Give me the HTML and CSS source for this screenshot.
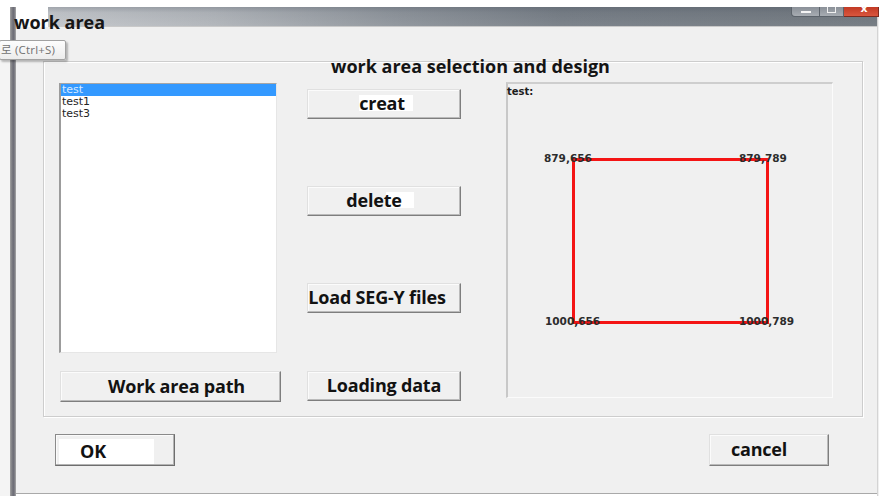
FILE: index.html
```html
<!DOCTYPE html>
<html lang="en">
<head>
<meta charset="utf-8">
<title>work area</title>
<link rel="stylesheet" href="styles.css">
</head>
<body>
<div class="screen">
  <div class="topline"></div>
  <div class="desk">
    <div class="gutter"></div>
    <div class="edge"></div>
    <div class="window">
      <div class="titlebar">
        <div class="titlebar-blank"></div>
        <div class="caption">
          <div class="controls">
            <span class="ctl ctl-min"><i></i></span>
            <span class="ctl ctl-max"><i></i></span>
            <span class="ctl ctl-close"><i>x</i></span>
          </div>
        </div>
      </div>
      <div class="client">
        <div class="groupbox">
          <div class="legend">work area selection and design</div>
          <div class="col-list">
            <div class="listbox">
              <div class="item selected">test</div>
              <div class="item">test1</div>
              <div class="item">test3</div>
            </div>
            <button class="btn btn-path">Work area path</button>
          </div>
          <div class="col-actions">
            <button class="btn"><span class="lbl lbl-creat">creat</span></button>
            <button class="btn btn-delete gap-lg"><span class="lbl lbl-delete">delete</span></button>
            <button class="btn btn-load gap-lg">Load SEG-Y files</button>
            <button class="btn gap-md">Loading data</button>
          </div>
          <div class="canvas">
            <svg class="plot" width="325" height="313" viewBox="0 0 325 313">
              <text class="plot-name" x="-1" y="11">test:</text>
              <rect class="area" x="65.5" y="75.5" width="194" height="163"></rect>
              <text class="corner" x="36" y="78">879,656</text>
              <text class="corner" x="231" y="78">879,789</text>
              <text class="corner" x="37" y="241">1000,656</text>
              <text class="corner" x="231" y="241">1000,789</text>
            </svg>
          </div>
        </div>
        <div class="actions">
          <button class="btn btn-dialog btn-ok"><span class="lbl lbl-ok">OK</span></button>
          <button class="btn btn-dialog btn-cancel">cancel</button>
        </div>
      </div>
    </div>
  </div>
  <div class="window-title">work area</div>
  <div class="tooltip">로 (Ctrl+S)</div>
</div>
</body>
</html>
```

FILE: styles.css
```css
* {
  box-sizing: border-box;
}

html, body {
  margin: 0;
  padding: 0;
  background: #f0f0f0;
}

.screen {
  position: relative;
  width: 879px;
  height: 496px;
  overflow: hidden;
  background: #f0f0f0;
  font-family: "Open Sans", "Liberation Sans", sans-serif;
}

.topline {
  height: 7px;
  background: #ffffff;
}

.desk {
  display: grid;
  grid-template-columns: 10px 6px 1fr;
  height: 489px;
}

.gutter {
  background: linear-gradient(#ffffff 0 34px, #f4f4f4 34px);
}

.edge {
  background: linear-gradient(to right, #a2a2a2 0, #7a7a80 35%, #6c6c76 65%, #a8a8a8 100%);
}

/* ---- window frame ---- */
.window {
  display: flex;
  flex-direction: column;
  background: #ffffff;
  padding-bottom: 2px;
  border-right: 1px solid #d4d4d4;
  margin-right: 1px;
}

.titlebar {
  display: flex;
  height: 20px;
  flex: none;
}

.titlebar-blank {
  width: 32px;
  background: #ffffff;
}

.caption {
  flex: 1;
  display: flex;
  justify-content: flex-end;
  align-items: flex-start;
  background:
    linear-gradient(rgba(60, 70, 85, 0.25) 0, rgba(60, 70, 85, 0.05) 30%, rgba(255, 255, 255, 0.05) 100%),
    linear-gradient(to right, #c3c6ca 0, #b0b4b9 20%, #8d939a 42%, #767d85 62%, #71787f 100%);
  border-bottom: 1px solid #c9c9c9;
}

.controls {
  display: flex;
  margin-right: -2px;
}

.ctl {
  display: flex;
  align-items: center;
  justify-content: center;
  height: 10px;
  border: 1px solid #5c636b;
  border-top: none;
  background: linear-gradient(#8a9098, #a7acb2);
}

.ctl-min {
  width: 29px;
  border-radius: 0 0 0 4px;
}

.ctl-min i {
  display: block;
  width: 10px;
  height: 2px;
  background: #f4f4f4;
  margin-top: 1px;
}

.ctl-max {
  width: 24px;
  border-left: none;
}

.ctl-max i {
  display: block;
  width: 9px;
  height: 6px;
  border: 1px solid #f0f0f0;
  border-top: none;
  margin-top: -3px;
}

.ctl-close {
  width: 35px;
  border-left: none;
  background: linear-gradient(#c23a24, #d9563e);
  border-color: #7d2a1e;
}

.ctl-close i {
  font-style: normal;
  font-family: "DejaVu Sans", sans-serif;
  font-weight: 700;
  font-size: 11px;
  line-height: 1;
  color: #ffffff;
  margin-top: -6px;
  margin-left: 6px;
}

/* ---- client area ---- */
.client {
  flex: 1;
  background: #f0f0f0;
  padding: 34px 0 0 27px;
  border-bottom: 1px solid #a9a9a9;
}

.groupbox {
  position: relative;
  display: flex;
  align-items: flex-start;
  width: 820px;
  height: 356px;
  padding: 21px 0 0 15px;
  border: 1px solid #cdcdcd;
  box-shadow: inset 1px 1px 0 #ffffff, 1px 1px 0 #ffffff;
}

.legend {
  position: absolute;
  left: 287px;
  top: -5px;
  font-size: 18px;
  line-height: 18px;
  font-weight: 700;
  color: #141414;
  white-space: nowrap;
}

.legend::before {
  content: "";
  position: absolute;
  left: 79px;
  top: -9px;
  width: 90px;
  height: 10px;
  background: #ffffff;
  z-index: -1;
}

/* ---- list column ---- */
.col-list {
  display: flex;
  flex-direction: column;
  width: 222px;
}

.listbox {
  width: 218px;
  height: 270px;
  background: #ffffff;
  border-style: solid;
  border-width: 1px 1px 1px 2px;
  border-color: #a6a6a6 #e6e6e6 #e6e6e6 #9c9c9c;
  font-family: "DejaVu Sans", sans-serif;
  font-size: 11px;
  line-height: 12px;
  color: #252525;
}

.item {
  padding-left: 1px;
  height: 12px;
}

.item.selected {
  background: #3399ff;
  color: #d6e9ff;
}

/* ---- buttons ---- */
.btn {
  display: flex;
  align-items: center;
  justify-content: center;
  width: 154px;
  height: 30px;
  padding: 0 0 2px 0;
  margin: 0;
  font-family: "Open Sans", "Liberation Sans", sans-serif;
  font-size: 18px;
  font-weight: 700;
  color: #121212;
  background: #f0f0f0;
  border: 1px solid;
  border-color: #e0e0e0 #7e7e7e #7e7e7e #e0e0e0;
  box-shadow: inset -1px -1px 0 #bababa, inset 1px 1px 0 #fbfbfb;
  white-space: nowrap;
  letter-spacing: -0.2px;
}

.lbl {
  display: inline-block;
  line-height: 16px;
}

.lbl-creat {
  background: #ffffff;
  padding: 0 8px 0 0;
  margin-left: 4px;
}

.lbl-delete {
  background: linear-gradient(to right, #f0f0f0 0 40px, #ffffff 40px);
  padding-right: 12px;
}

.btn-delete {
  padding-right: 8px;
}

.btn-load {
  padding-right: 14px;
}

.btn-path {
  width: 221px;
  height: 31px;
  margin-top: 18px;
  margin-left: 1px;
  padding-left: 12px;
}

.col-actions {
  display: flex;
  flex-direction: column;
  margin-left: 26px;
  padding-top: 6px;
}

.gap-lg {
  margin-top: 67px;
}

.gap-md {
  margin-top: 58px;
}

/* ---- drawing panel ---- */
.canvas {
  width: 327px;
  height: 316px;
  margin-left: 45px;
  margin-top: -1px;
  border-style: solid;
  border-width: 2px 1px 1px 2px;
  border-color: #cecece #fbfbfb #fbfbfb #c8c8c8;
  background: #f0f0f0;
}

.plot {
  display: block;
  overflow: visible;
}

.plot-name {
  font-family: "DejaVu Sans", sans-serif;
  font-weight: 700;
  font-size: 10px;
  fill: #1c1c1c;
}

.area {
  fill: none;
  stroke: #f41414;
  stroke-width: 3;
}

.corner {
  font-family: "DejaVu Sans", sans-serif;
  font-weight: 700;
  font-size: 10.5px;
  fill: #2c2c2c;
}

/* ---- dialog buttons ---- */
.actions {
  display: flex;
  justify-content: space-between;
  width: 774px;
  margin-left: 12px;
  margin-top: 17px;
}

.btn-dialog {
  width: 120px;
  height: 32px;
}

.btn-ok {
  justify-content: flex-start;
  padding: 2px 0 0 3px;
  border-color: #8a8a8a #6e6e6e #6e6e6e #8a8a8a;
  box-shadow: inset -1px -1px 0 #b4b4b4, inset 1px 1px 0 #fbfbfb;
}

.lbl-ok {
  background: #ffffff;
  padding: 4px 48px 5px 21px;
}

.btn-cancel {
  padding-right: 20px;
}

/* ---- overlays ---- */
.window-title {
  position: absolute;
  left: 14px;
  top: 13px;
  font-size: 18px;
  line-height: 18px;
  font-weight: 700;
  color: #161616;
  white-space: nowrap;
}

.tooltip {
  position: absolute;
  left: -1px;
  top: 40px;
  width: 67px;
  height: 20px;
  padding-left: 1px;
  font-family: "Open Sans", "Noto Sans CJK KR", sans-serif;
  font-size: 11.5px;
  line-height: 18px;
  letter-spacing: 0.2px;
  color: #727272;
  background: linear-gradient(#fdfdfd, #ececec);
  border: 1px solid #a2a2a2;
  border-radius: 2px;
  box-shadow: 2px 2px 2px rgba(0, 0, 0, 0.25);
  white-space: nowrap;
}
```
